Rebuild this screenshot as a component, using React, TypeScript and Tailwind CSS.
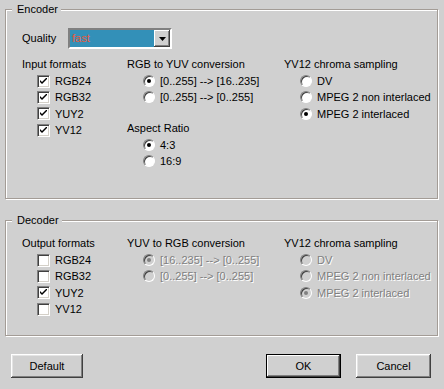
import React from 'react'

const bg = 'bg-[#d0d0d0]'

const Check = () => (
  <svg width="7" height="7" viewBox="0 0 7 7" className="block">
    <path d="M0 2 L0 4 L2 6 L7 1 L7 -1 L2 4 Z" fill="#000" />
  </svg>
)

const Checkbox: React.FC<{ label: string; checked?: boolean }> = ({ label, checked }) => (
  <div className="flex h-[16.3px] items-center pl-[15px]">
    <span className="flex h-[13px] w-[13px] items-center justify-center border border-b-white border-l-[#808080] border-r-white border-t-[#808080] bg-white shadow-[inset_1px_1px_0_#404040,inset_-1px_-1px_0_#d4d0c8]">
      {checked && <Check />}
    </span>
    <span className="ml-[5px]">{label}</span>
  </div>
)

const Radio: React.FC<{ label: string; checked?: boolean; disabled?: boolean }> = ({
  label,
  checked,
  disabled,
}) => (
  <div className="flex h-[16.3px] items-center pl-[16px]">
    <span
      className={`flex h-[12px] w-[12px] items-center justify-center rounded-full border border-b-white border-l-[#808080] border-r-white border-t-[#808080] shadow-[inset_1px_1px_0_#404040] ${
        disabled ? bg : 'bg-white'
      }`}
    >
      {checked && (
        <span className={`h-[4px] w-[4px] rounded-full ${disabled ? 'bg-[#808080]' : 'bg-black'}`} />
      )}
    </span>
    <span className={`ml-[5px] ${disabled ? 'text-[#808080] [text-shadow:1px_1px_0_#fff]' : ''}`}>
      {label}
    </span>
  </div>
)

const GroupBox: React.FC<{ title: string; className: string; children: React.ReactNode }> = ({
  title,
  className,
  children,
}) => (
  <div
    className={`relative w-[433px] border border-[#a39c96] shadow-[inset_1px_1px_0_#fff,1px_1px_0_#fff] ${className}`}
  >
    <span className={`absolute left-[6px] top-[-7px] pl-[5px] pr-[3px] leading-[13px] ${bg}`}>
      {title}
    </span>
    {children}
  </div>
)

const Button: React.FC<{ label: string; primary?: boolean }> = ({ label, primary }) => (
  <div
    className={`flex h-[24px] items-center justify-center ${label === 'Default' ? 'w-[72px]' : 'w-[75px]'} ${
      primary
        ? 'border border-black shadow-[inset_-1px_-1px_0_#404040,inset_1px_1px_0_#fff,inset_-2px_-2px_0_#808080]'
        : 'shadow-[inset_-1px_-1px_0_#404040,inset_1px_1px_0_#fff,inset_-2px_-2px_0_#808080,inset_2px_2px_0_#e4e4e4]'
    }`}
  >
    {label}
  </div>
)

const Header: React.FC<{ children: React.ReactNode; className?: string }> = ({ children, className }) => (
  <div className={`mb-px h-4 leading-4 ${className ?? ''}`}>{children}</div>
)

export default function App() {
  return (
    <div
      className={`h-[389px] w-[444px] overflow-hidden pl-[5px] pt-[9px] font-['Liberation_Sans',Arial,sans-serif] text-[11px] text-black ${bg}`}
    >
      <GroupBox title="Encoder" className="h-[190px] pl-[16px] pt-[18px]">
        <div className="flex h-[21px] items-center">
          <span className="w-[46px]">Quality</span>
          <div className="flex h-[21px] w-[104px] border-2 border-b-white border-l-[#808080] border-r-white border-t-[#808080] bg-white">
            <div className="flex flex-1 items-center bg-[#3390b8] pl-[2px] text-[#e85a3c]">fast</div>
            <div
              className={`flex w-[16px] items-center justify-center shadow-[inset_-1px_-1px_0_#404040,inset_1px_1px_0_#fff,inset_-2px_-2px_0_#808080] ${bg}`}
            >
              <svg width="7" height="4" viewBox="0 0 7 4" className="block">
                <path d="M0 0 H7 L3.5 4 Z" fill="#000" />
              </svg>
            </div>
          </div>
        </div>

        <div className="mt-[7px] flex">
          <div className="w-[105px]">
            <Header>Input formats</Header>
            <Checkbox label="RGB24" checked />
            <Checkbox label="RGB32" checked />
            <Checkbox label="YUY2" checked />
            <Checkbox label="YV12" checked />
          </div>
          <div className="w-[157px]">
            <Header>RGB to YUV conversion</Header>
            <Radio label="[0..255] --> [16..235]" checked />
            <Radio label="[0..255] --> [0..255]" />
            <Header className="mt-[14px]">Aspect Ratio</Header>
            <Radio label="4:3" checked />
            <Radio label="16:9" />
          </div>
          <div>
            <Header>YV12 chroma sampling</Header>
            <Radio label="DV" />
            <Radio label="MPEG 2 non interlaced" />
            <Radio label="MPEG 2 interlaced" checked />
          </div>
        </div>
      </GroupBox>

      <GroupBox title="Decoder" className="mt-[21px] h-[116px] pl-[16px] pt-[14px]">
        <div className="flex">
          <div className="w-[105px]">
            <Header>Output formats</Header>
            <Checkbox label="RGB24" />
            <Checkbox label="RGB32" />
            <Checkbox label="YUY2" checked />
            <Checkbox label="YV12" />
          </div>
          <div className="w-[157px]">
            <Header>YUV to RGB conversion</Header>
            <Radio label="[16..235] --> [0..255]" checked disabled />
            <Radio label="[0..255] --> [0..255]" disabled />
          </div>
          <div>
            <Header>YV12 chroma sampling</Header>
            <Radio label="DV" disabled />
            <Radio label="MPEG 2 non interlaced" disabled />
            <Radio label="MPEG 2 interlaced" checked disabled />
          </div>
        </div>
      </GroupBox>

      <div className="mt-[18px] flex w-[433px] pl-[6px] pr-[7px]">
        <Button label="Default" />
        <div className="flex-1" />
        <Button label="OK" primary />
        <div className="w-[15px]" />
        <Button label="Cancel" />
      </div>
    </div>
  )
}
